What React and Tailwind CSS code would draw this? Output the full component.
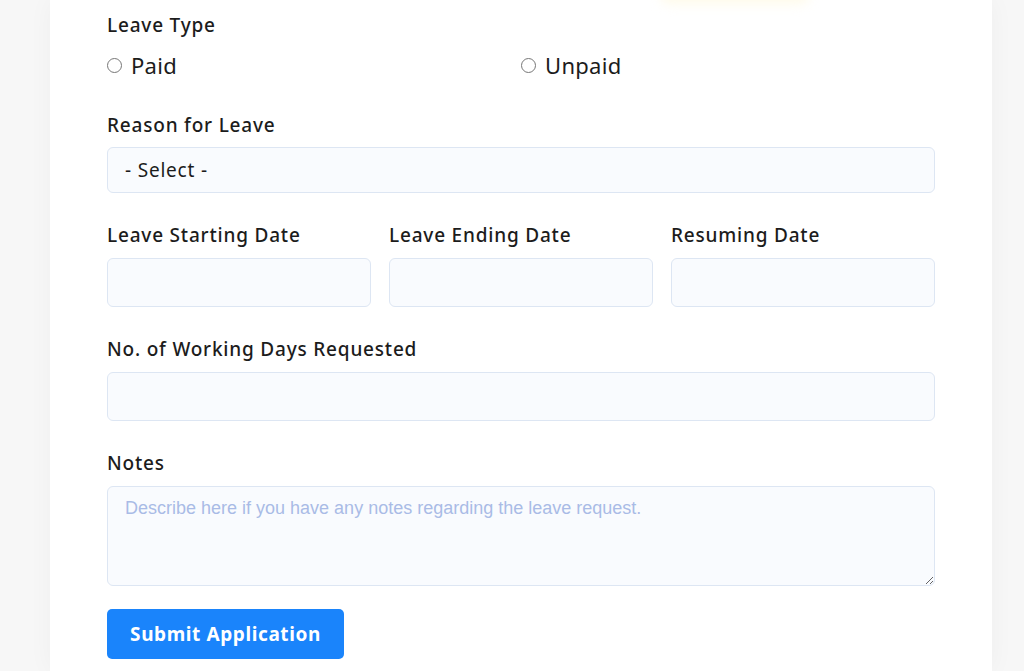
import React from "react";

const font = { fontFamily: "'Noto Sans', Lato, sans-serif" };

function Label({ children }) {
  return (
    <label className="block text-[19px] font-medium leading-[24px] tracking-[0.8px] text-[#1c1c1c]">
      {children}
    </label>
  );
}

function Field() {
  return (
    <input
      type="text"
      className="mt-[11px] block h-[49px] w-full rounded-[6px] border border-[#dde6f3] bg-[#f9fbfe] px-[17px] outline-none"
    />
  );
}

export default function App() {
  return (
    <div className="h-[671px] overflow-hidden bg-[#f7f7f7]" style={font}>
      <div className="relative ml-[50px] mr-[32px] h-full bg-white px-[57px] pt-[13px] shadow-[0_0_24px_rgba(0,0,0,0.04)]">
        {/* faint blob at the top */}
        <div className="absolute left-[610px] top-[-14px] h-[18px] w-[150px] rounded-full bg-[#fffbea] blur-[6px]" />

        {/* Leave type */}
        <Label>Leave Type</Label>
        <div className="mt-[15px] grid grid-cols-2">
          <label className="flex items-center gap-[9px] text-[22px] leading-[26px] tracking-[0.3px] text-[#1c1c1c]">
            <input type="radio" name="type" className="m-0 h-[15px] w-[15px]" />
            Paid
          </label>
          <label className="flex items-center gap-[9px] text-[22px] leading-[26px] tracking-[0.3px] text-[#1c1c1c]">
            <input type="radio" name="type" className="m-0 h-[15px] w-[15px]" />
            Unpaid
          </label>
        </div>

        {/* Reason */}
        <div className="mt-[35px]">
          <Label>Reason for Leave</Label>
          <div className="mt-[10px] flex h-[46px] items-center rounded-[6px] border border-[#dde6f3] bg-[#f9fbfe] px-[17px] text-[19px] tracking-[0.8px] text-[#1c1c1c]">
            - Select -
          </div>
        </div>

        {/* Dates */}
        <div className="mt-[30px] grid grid-cols-3 gap-x-[18px]">
          <div>
            <Label>Leave Starting Date</Label>
            <Field />
          </div>
          <div>
            <Label>Leave Ending Date</Label>
            <Field />
          </div>
          <div>
            <Label>Resuming Date</Label>
            <Field />
          </div>
        </div>

        <div className="mt-[30px]">
          <Label>No. of Working Days Requested</Label>
          <Field />
        </div>

        <div className="mt-[30px]">
          <Label>Notes</Label>
          <textarea
            placeholder="Describe here if you have any notes regarding the leave request."
            className="mt-[11px] block h-[100px] w-full rounded-[6px] border border-[#dde6f3] bg-[#f9fbfe] px-[17px] pt-[8px] pb-[10px] text-[18px] text-[#1c1c1c] outline-none placeholder:text-[#a9bbe6]"
            style={{ fontFamily: "'Liberation Sans', Arial, sans-serif" }}
          />
        </div>

        <button className="mt-[23px] h-[50px] w-[237px] rounded-[5px] bg-[#1a84fb] text-[19px] font-bold tracking-[0.6px] text-white">
          Submit Application
        </button>
      </div>
    </div>
  );
}
